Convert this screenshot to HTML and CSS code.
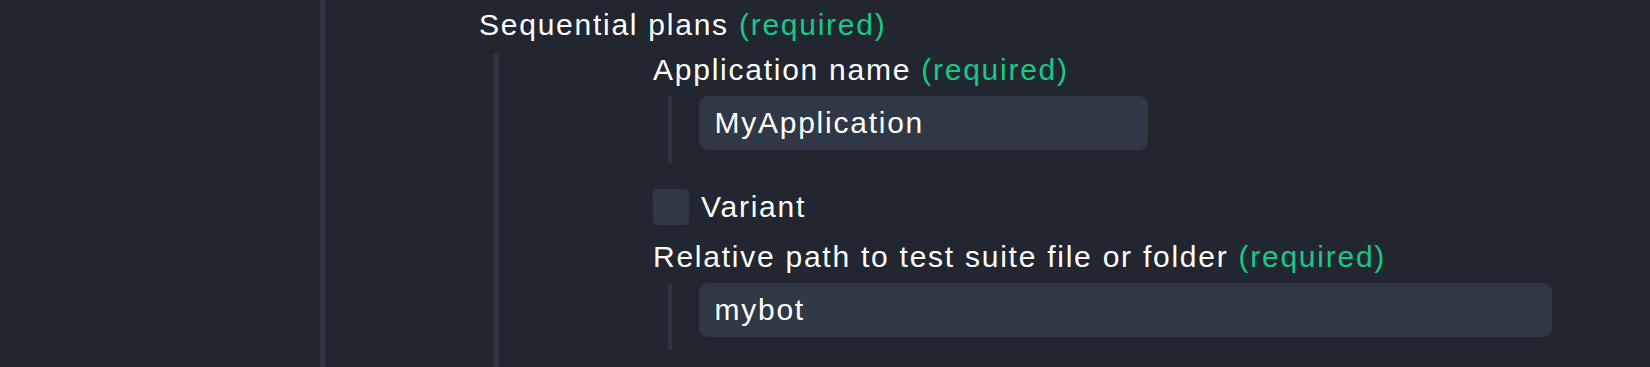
FILE: index.html
```html
<!DOCTYPE html>
<html lang="en">
<head>
<meta charset="utf-8">
<title>Sequential plans</title>
<link rel="stylesheet" href="styles.css">
</head>
<body>
<div class="tree">
  <div class="field">
    <div class="label">Sequential plans <span class="req">(required)</span></div>
    <div class="nest">
      <div class="field">
        <div class="label">Application name <span class="req">(required)</span></div>
        <div class="value-wrap">
          <input class="text-input short" type="text" value="MyApplication">
        </div>
      </div>
      <label class="check-row">
        <input class="checkbox" type="checkbox">
        <span class="check-label">Variant</span>
      </label>
      <div class="field">
        <div class="label">Relative path to test suite file or folder <span class="req">(required)</span></div>
        <div class="value-wrap">
          <input class="text-input long" type="text" value="mybot">
        </div>
      </div>
    </div>
  </div>
</div>
</body>
</html>
```

FILE: styles.css
```css
html, body {
  margin: 0;
  padding: 0;
  background: #212630;
  height: 100%;
  overflow: hidden;
}

body {
  font-family: "Liberation Sans", Arial, sans-serif;
  font-size: 30px;
  letter-spacing: 1.75px;
  color: #ffffff;
}

.tree {
  margin-left: 320px;
  border-left: 5px solid #2e3541;
  padding: 8px 0 40px 154px;
  min-height: 100%;
  box-sizing: border-box;
}

.field {
  display: flex;
  flex-direction: column;
}

.label {
  line-height: 34.5px;
  white-space: nowrap;
}

.req {
  color: #18c985;
}

.nest {
  margin-top: 10.5px;
  margin-left: 15px;
  border-left: 5px solid #2e3541;
  padding: 0 0 60px 154px;
  display: flex;
  flex-direction: column;
}

.value-wrap {
  margin-top: 8.5px;
  margin-left: 15px;
  border-left: 4.5px solid #2e3541;
  padding: 0 0 13px 26.5px;
  display: flex;
}

.text-input {
  font: inherit;
  letter-spacing: inherit;
  color: #ffffff;
  background: #303845;
  border: none;
  outline: none;
  border-radius: 9px;
  height: 54px;
  line-height: 54px;
  padding: 0 16px;
  margin: 0;
  box-sizing: border-box;
}

.text-input.short {
  width: 449px;
}

.text-input.long {
  width: 853px;
}

.check-row {
  margin-top: 26px;
  display: flex;
  align-items: center;
  gap: 12px;
  height: 36px;
}

.checkbox {
  appearance: none;
  -webkit-appearance: none;
  width: 36px;
  height: 36px;
  margin: 0;
  border-radius: 5px;
  background: #303845;
  flex: none;
}

.check-label {
  line-height: 34.5px;
}

.check-row + .field {
  margin-top: 14.5px;
}
```
